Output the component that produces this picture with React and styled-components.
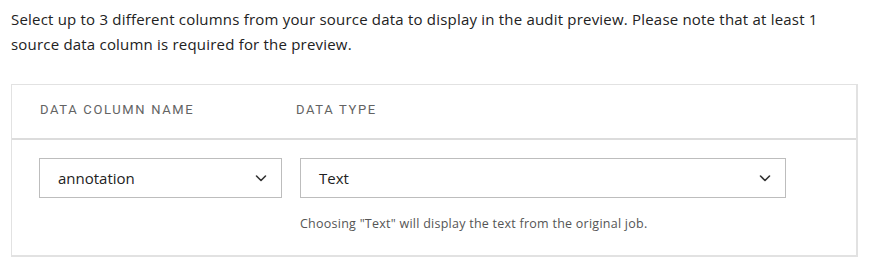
import React from 'react';
import styled, { createGlobalStyle } from 'styled-components';

const GlobalStyle = createGlobalStyle`
    body {
        margin: 0;
        background: #ffffff;
        font-family: "Open Sans", "Lato", sans-serif;
        color: #222;
    }
`;

const Chevron = () => (
    <svg width="14" height="14" viewBox="0 0 14 14" fill="none">
        <path d="M2.5 5L7 9.5L11.5 5" stroke="#333" strokeWidth="1.6" strokeLinecap="round" strokeLinejoin="round" />
    </svg>
);

const App = () => {
    return (
        <StyledPage>
            <GlobalStyle />
            <StyledIntro>
                Select up to 3 different columns from your source data to display in the audit preview. Please note that at least 1
                <br />
                source data column is required for the preview.
            </StyledIntro>
            <StyledCard>
                <StyledHeader>
                    <StyledHeading>Data Column Name</StyledHeading>
                    <StyledHeading>Data Type</StyledHeading>
                </StyledHeader>
                <StyledRow>
                    <StyledSelect $width={243}>
                        <span>annotation</span>
                        <Chevron />
                    </StyledSelect>
                    <StyledField>
                        <StyledSelect $width={486}>
                            <span>Text</span>
                            <Chevron />
                        </StyledSelect>
                        <StyledHelp>Choosing "Text" will display the text from the original job.</StyledHelp>
                    </StyledField>
                </StyledRow>
            </StyledCard>
        </StyledPage>
    );
};

export default App;

const StyledPage = styled.div`
    padding: 7px 13px 0 11px;
`;

const StyledIntro = styled.p`
    margin: 0;
    font-size: 15px;
    line-height: 25px;
    letter-spacing: 0.2px;
    color: #222;
    white-space: nowrap;
`;

const StyledCard = styled.div`
    margin-top: 27px;
    border: 1px solid #e2e2e2;
    border-bottom-width: 2px;
    border-right-width: 2px;
    background: #fff;
`;

const StyledHeader = styled.div`
    display: grid;
    grid-template-columns: 256px 1fr;
    align-items: center;
    height: 55px;
    padding-left: 28px;
    padding-bottom: 5px;
    box-sizing: border-box;
    border-bottom: 2px solid #dcdcdc;
`;

const StyledHeading = styled.div`
    font-family: "Roboto", "Liberation Sans", sans-serif;
    font-size: 13px;
    letter-spacing: 1.65px;
    text-transform: uppercase;
    color: #636363;
`;

const StyledRow = styled.div`
    display: flex;
    gap: 18px;
    padding: 18px 0 22px 27px;
`;

const StyledField = styled.div`
    display: flex;
    flex-direction: column;
`;

const StyledSelect = styled.div`
    box-sizing: border-box;
    width: ${(p) => p.$width}px;
    height: 40px;
    display: flex;
    align-items: center;
    justify-content: space-between;
    padding: 0 13px 0 18px;
    border: 1px solid #bdbdbd;
    font-size: 15px;
    color: #222;
`;

const StyledHelp = styled.div`
    margin-top: 17px;
    font-size: 12.5px;
    line-height: 18px;
    letter-spacing: 0.25px;
    color: #555;
`;
